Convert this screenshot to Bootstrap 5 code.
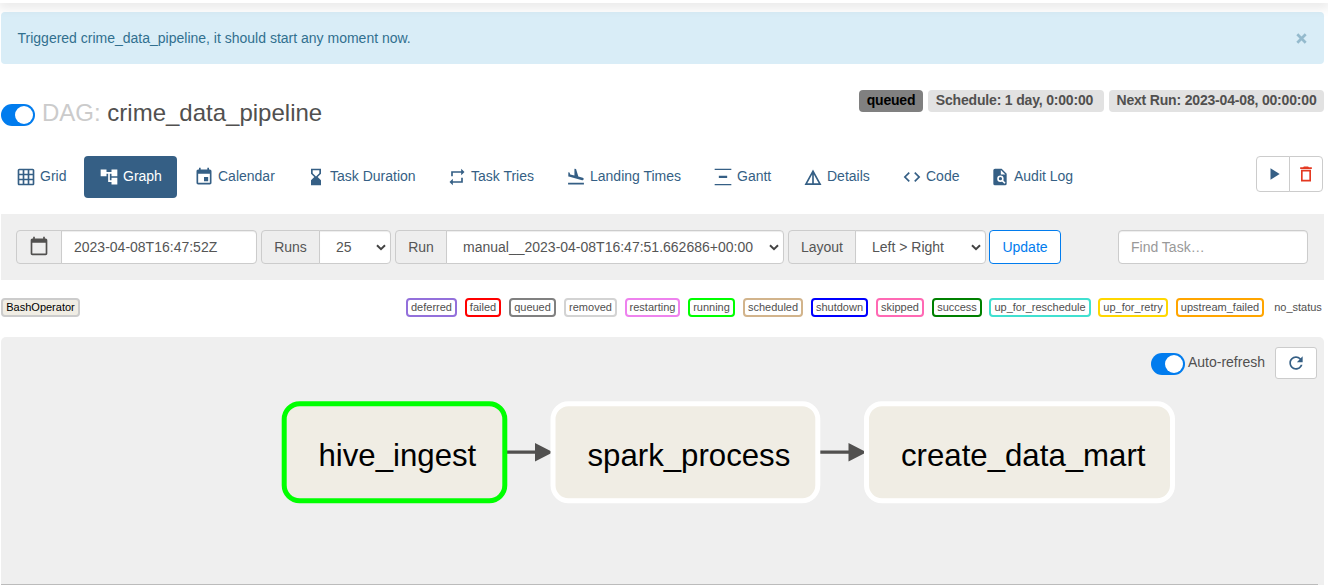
<!DOCTYPE html>
<html lang="en">
<head>
<meta charset="utf-8">
<meta name="viewport" content="width=device-width, initial-scale=1">
<title>crime_data_pipeline - Graph</title>
<link href="https://cdn.jsdelivr.net/npm/bootstrap@5.3.0/dist/css/bootstrap.min.css" rel="stylesheet">
<style>
body{font-family:"Liberation Sans",Arial,sans-serif;font-size:14px;line-height:20px;color:#51504f;background:#fff;height:585px;overflow:hidden}
.top-shadow{height:3px;box-shadow:0 1px 12px 2px rgba(0,0,0,.15);background:#fff;position:relative;z-index:2}
.page{margin:9px 4px 0 1px}
.flash{height:52px;background:#d9edf7;color:#31708f;border-radius:4px;padding:0 17px 0 16.5px;border:0}
.flash svg{margin-top:1px}
.title-row{height:92px;padding-top:26px}
.dag-title{font-size:24px;line-height:30px;font-weight:400;margin:8px 0 0}
.dag-title span{color:#cbcbcb}
.switch{width:34px;height:22px;border-radius:11px;background:#017cee;padding:2px;display:flex;justify-content:flex-end;flex:none}
.switch i{width:18px;height:18px;border-radius:50%;background:#fff}
.title-row .switch{margin:14px 7px 0 0}
.chips{gap:5px}
.chip{height:22px;line-height:21px;border-radius:4px;background:#e2e2e2;font-weight:700;font-size:14px;text-align:center;letter-spacing:-.18px;white-space:nowrap}
.chip.state{background:#808080;color:#000;width:64px}
.chip.c-s{width:176px;padding-right:3px}
.chip.c-n{width:215px}
.views{gap:2px}
.views .nav-link{height:42px;padding:10px 0 10px 15px;color:#355f85;border-radius:4px;display:flex;align-items:center;gap:4px;white-space:nowrap;line-height:20px}
.views .nav-link span{position:relative;top:-1px}
.views .nav-link.active{background:#355f85;color:#fff}
.views svg{width:20px;height:20px;fill:currentColor;flex:none}
.v-grid{width:81px}.v-graph{width:93px}.v-cal{width:110px}.v-dur{width:139px}.v-tries{width:117px}.v-land{width:145px}.v-gantt{width:88px}.v-det{width:97px}.v-code{width:86px}.v-audit{width:114px}
.acts{margin-right:1px}
.act{width:34px;height:36px;border:1px solid #ccc;background:#fff;padding:0;display:flex;align-items:center;justify-content:center;border-radius:4px}
.act + .act{margin-left:-1px}
.act svg{width:20px;height:20px}
.filters{height:66px;margin-top:16px;background:#efefef;padding:16px 16px 0 15px}
.filters .input-group{height:34px;flex-wrap:nowrap;margin-right:4px}
.filters .input-group-text{background:#eee;border-color:#ccc;color:#555;font-size:14px;padding:0;justify-content:center;border-radius:4px}
.filters .input-group-text svg{margin-top:-2px}
.filters .form-control,.filters .form-select{border-color:#ccc;color:#555;font-size:14px;border-radius:4px;height:34px;padding:0 12px;box-shadow:inset 0 1px 1px rgba(0,0,0,.075);min-width:0}
.filters .form-select{padding:0 16px;background:#fff url("data:image/svg+xml,%3Csvg xmlns='http://www.w3.org/2000/svg' viewBox='0 0 10 7'%3E%3Cpath d='M1 1.2 5 5.2 9 1.2' fill='none' stroke='%23444' stroke-width='2'/%3E%3C/svg%3E") no-repeat right 4px center/10px 7px}
.filters .input-group > :first-child{border-top-right-radius:0;border-bottom-right-radius:0}
.filters .input-group > :last-child{border-top-left-radius:0;border-bottom-left-radius:0}
.filters .form-control::placeholder{color:#999}
.g-date{width:241px}.g-date .input-group-text{width:46px}
.g-runs{width:130px}.g-runs .input-group-text{width:59px}
.g-run{width:389px}.g-run .input-group-text{width:52px}
.filters .g-layout{width:198px;margin-right:3px}.g-layout .input-group-text{width:68px}
.upd{width:72px;height:34px;padding:0;border:1px solid #017cee;color:#017cee;background:#fff;font-size:14px;border-radius:4px}
.filters .find{width:190px}
.legend-row{height:19px;margin-top:18px}
.tag{height:19px;line-height:15px;border:2px solid #ccc;border-radius:4px;font-size:11px;text-align:center;white-space:nowrap;color:#51504f;background:#fff}
.states{gap:8px}
.op{background:#f0ede4;color:#000;width:79px}
.canvas{height:247px;margin-top:20px;background:#efefef;border-radius:5px 5px 0 0;padding:10px 7px 0 0;position:relative}
.canvas .switch{margin:6px 3px 0 0}
.canvas .lbl{margin:5px 10px 0 0}
.reload{width:42px;height:32px;border:1px solid #ccc;border-radius:3px;background:#fff;padding:0 0 1px;display:flex;align-items:center;justify-content:center}
.dag-graph{position:absolute;left:0;top:0;width:1323px;height:247px;pointer-events:none}
.bottom-rule{height:1px;background:#bbb;margin-right:6px}
.under{background:#efefef}
</style>
</head>
<body>
<div class="top-shadow"></div>
<main class="page">
  <div class="flash alert mb-0 d-flex align-items-center justify-content-between" role="alert">
    <span>Triggered crime_data_pipeline, it should start any moment now.</span>
    <svg width="11" height="11" viewBox="0 0 11 11"><path d="M1.3 1.3 9.7 9.7M9.7 1.3 1.3 9.7" stroke="#94bacd" stroke-width="2.7"/></svg>
  </div>
  <header class="title-row d-flex justify-content-between align-items-start">
    <div class="d-flex"><div class="switch"><i></i></div><h3 class="dag-title"><span>DAG:</span> crime_data_pipeline</h3></div>
    <div class="d-flex chips"><span class="chip state">queued</span><span class="chip c-s">Schedule: 1 day, 0:00:00</span><span class="chip c-n">Next Run: 2023-04-08, 00:00:00</span></div>
  </header>
  <div class="d-flex justify-content-between align-items-start">
    <nav class="nav nav-pills views flex-nowrap">
      <a class="nav-link v-grid"><svg viewBox="0 0 24 24"><path d="M20 2H4c-1.100 0-2 .9-2 2v16c0 1.100.9 2 2 2h16c1.100 0 2-.9 2-2V4c0-1.100-.9-2-2-2zM8 20H4v-4h4v4zm0-6H4v-4h4v4zm0-6H4V4h4v4zm6 12h-4v-4h4v4zm0-6h-4v-4h4v4zm0-6h-4V4h4v4zm6 12h-4v-4h4v4zm0-6h-4v-4h4v4zm0-6h-4V4h4v4z"/></svg><span>Grid</span></a>
      <a class="nav-link v-graph active"><svg viewBox="0 0 24 24"><path d="M22 11V3h-7v3H9V3H2v8h7V8h2v10h4v3h7v-8h-7v3h-2V8h2v3z"/></svg><span>Graph</span></a>
      <a class="nav-link v-cal"><svg viewBox="0 0 24 24"><path d="M17 12h-5v5h5v-5zM16 1v2H8V1H6v2H5c-1.110 0-1.990.9-1.990 2L3 19c0 1.100.89 2 2 2h14c1.100 0 2-.9 2-2V5c0-1.100-.9-2-2-2h-1V1h-2zm3 18H5V8h14v11z"/></svg><span>Calendar</span></a>
      <a class="nav-link v-dur"><svg viewBox="0 0 24 24"><path d="M18 22l-.01-6L14 12l3.990-4.010L18 2H6v6l4 4-4 3.990V22h12zM8 7.500V4h8v3.500l-4 4-4-4z"/></svg><span>Task Duration</span></a>
      <a class="nav-link v-tries"><svg viewBox="0 0 24 24"><path d="M7 7h10v3l4-4-4-4v3H5v6h2V7zm10 10H7v-3l-4 4 4 4v-3h12v-6h-2v4z"/></svg><span>Task Tries</span></a>
      <a class="nav-link v-land"><svg viewBox="0 0 24 24"><path d="M2.500 19h19v2h-19zm7.180-5.730l4.350 1.160 5.310 1.420c.8.210 1.620-.26 1.840-1.060.21-.8-.26-1.620-1.060-1.840l-5.310-1.420-2.760-9.020L10.120 2v8.280L5.150 8.950l-.93-2.320-1.450-.39v5.170l1.600.43 5.310 1.430z"/></svg><span>Landing Times</span></a>
      <a class="nav-link v-gantt"><svg viewBox="0 0 24 24"><path d="M2 2h20v1.500H2zM2 20.500h20V22H2zM7 10.500h10v2.600H7z"/></svg><span>Gantt</span></a>
      <a class="nav-link v-det"><svg viewBox="0 0 24 24"><path d="M12 3 1.800 21.500h20.400zM11 9v10.500H5.200zM13 9l5.800 10.500H13z"/></svg><span>Details</span></a>
      <a class="nav-link v-code"><svg viewBox="0 0 24 24"><path d="M9.400 16.600L4.800 12l4.600-4.600L8 6l-6 6 6 6 1.400-1.400zm5.200 0l4.600-4.600-4.600-4.600L16 6l6 6-6 6-1.400-1.400z"/></svg><span>Code</span></a>
      <a class="nav-link v-audit"><svg viewBox="0 0 24 24"><path fill-rule="evenodd" d="M14 2H6a2 2 0 0 0-2 2v16a2 2 0 0 0 2 2h12a2 2 0 0 0 2-2V8zM13 3.500 18.500 9H13z"/><circle cx="12.500" cy="14" r="2.900" fill="none" stroke="#fff" stroke-width="1.900"/><path d="m14.500 16 3.500 3.500" stroke="#fff" stroke-width="1.900"/></svg><span>Audit Log</span></a>
    </nav>
    <div class="d-flex acts">
      <button class="act rounded-end-0"><svg viewBox="0 0 24 24"><path d="M9 5v14l11-7z" fill="#355f85"/></svg></button>
      <button class="act rounded-start-0"><svg viewBox="0 0 24 24"><path d="M6 21h12V7H6v14zM8 9h8v10H8V9zM15.500 4l-1-1h-5l-1 1H5v2h14V4z" fill="#e43921"/></svg></button>
    </div>
  </div>
  <form class="filters d-flex">
    <div class="input-group g-date"><span class="input-group-text"><svg width="20" height="20" viewBox="0 0 24 24" fill="#51504f"><path d="M20 3h-1V1h-2v2H7V1H5v2H4c-1.100 0-2 .9-2 2v16c0 1.100.9 2 2 2h16c1.100 0 2-.9 2-2V5c0-1.100-.9-2-2-2zm0 18H4V8h16v13z"/></svg></span><input class="form-control" value="2023-04-08T16:47:52Z"></div>
    <div class="input-group g-runs"><label class="input-group-text">Runs</label><select class="form-select"><option>25</option></select></div>
    <div class="input-group g-run"><label class="input-group-text">Run</label><select class="form-select"><option>manual__2023-04-08T16:47:51.662686+00:00</option></select></div>
    <div class="input-group g-layout"><label class="input-group-text">Layout</label><select class="form-select"><option>Left &gt; Right</option></select></div>
    <button type="button" class="upd">Update</button>
    <input class="form-control find ms-auto" placeholder="Find Task…">
  </form>
  <div class="legend-row d-flex justify-content-between">
    <span class="tag op">BashOperator</span>
    <div class="states d-flex">
      <span class="tag" style="width:51px;border-color:mediumpurple">deferred</span>
      <span class="tag" style="width:36px;border-color:red">failed</span>
      <span class="tag" style="width:47px;border-color:gray">queued</span>
      <span class="tag" style="width:53px;border-color:lightgrey">removed</span>
      <span class="tag" style="width:55px;border-color:violet">restarting</span>
      <span class="tag" style="width:47px;border-color:lime">running</span>
      <span class="tag" style="width:60px;border-color:tan">scheduled</span>
      <span class="tag" style="width:57px;border-color:blue">shutdown</span>
      <span class="tag" style="width:48px;border-color:hotpink">skipped</span>
      <span class="tag" style="width:50px;border-color:green">success</span>
      <span class="tag" style="width:102px;margin-left:-1px;border-color:turquoise">up_for_reschedule</span>
      <span class="tag" style="width:70px;margin-left:-1px;border-color:gold">up_for_retry</span>
      <span class="tag" style="width:88px;border-color:orange">upstream_failed</span>
      <span class="tag" style="width:52px;border-color:transparent">no_status</span>
    </div>
  </div>
  <section class="canvas">
    <div class="d-flex justify-content-end"><div class="switch"><i></i></div><span class="lbl">Auto-refresh</span>
      <button class="reload"><svg width="20" height="20" viewBox="0 0 24 24" fill="#355f85"><path d="M17.650 6.350C16.200 4.900 14.210 4 12 4c-4.420 0-7.990 3.580-7.990 8s3.570 8 7.990 8c3.730 0 6.840-2.550 7.730-6h-2.080c-.82 2.330-3.040 4-5.650 4-3.310 0-6-2.690-6-6s2.690-6 6-6c1.660 0 3.140.69 4.220 1.780L13 11h7V4l-2.350 2.350z"/></svg></button></div>
    <svg class="dag-graph" viewBox="1 337 1323 247" font-family="'Liberation Sans',Arial,sans-serif" font-size="31.200">
      <g stroke="#51504f" stroke-width="3.200"><path d="M507 452.200H538M820 452.200H851"/></g>
      <g fill="#51504f"><path d="M535 443v18.500l18-9.250zM848.500 443v18.500l18-9.250z"/></g>
      <g fill="#f0ede4" stroke-width="5">
        <rect x="284.200" y="403.700" width="220.600" height="97" rx="15.500" stroke="#0f0"/>
        <rect x="553" y="403.700" width="264.800" height="97" rx="15.500" stroke="#fff"/>
        <rect x="866.500" y="403.700" width="306" height="97" rx="15.500" stroke="#fff"/>
      </g>
      <text x="318.500" y="466">hive_ingest</text><text x="587.500" y="466">spark_process</text><text x="901" y="466">create_data_mart</text>
    </svg>
  </section>
  <div class="under"><div class="bottom-rule"></div></div>
</main>
<script src="https://cdn.jsdelivr.net/npm/bootstrap@5.3.0/dist/js/bootstrap.bundle.min.js"></script>
</body>
</html>
